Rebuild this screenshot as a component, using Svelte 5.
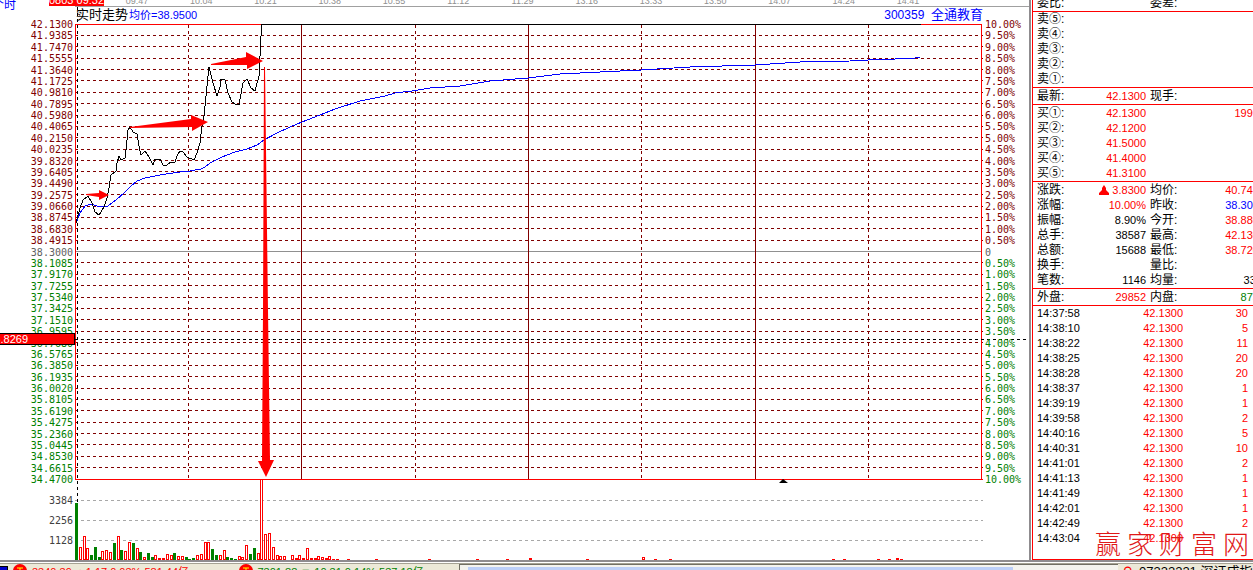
<script>
    const times = ['09:47', '10:04', '10:21', '10:38', '10:55', '11:12', '11:29', '13:16', '13:33', '13:50', '14:07', '14:24', '14:41']

    // 41 rows, from +10% down to -10% of the previous close
    const levels = Array.from({ length: 41 }, (_, i) => ({
        y: Math.floor(24 + i * 11.375) + 0.5,
        price: (42.13 - i * 0.1915).toFixed(4),
        percent: i === 20 ? '0' : Math.abs(10 - i * 0.5).toFixed(2) + '%',
        tone: i < 20 ? 'up' : i > 20 ? 'down' : 'flat',
    }))
    const volumeLevels = [
        { y: 500.5, label: '3384' },
        { y: 520.5, label: '2256' },
        { y: 540.5, label: '1128' },
    ]

    const priceLine = '76,223 80,208 83,200 88,196 92,203 95,212 99,215 104,207 107,198 109,188 111,175 116,171 117,163 119,156 121,160 125,158 126,150 128,130 130,127 133,132 137,134 139,146 141,155 145,151 149,157 153,165 155,159 160,159 163,165 167,165 171,162 175,162 177,156 180,151 183,152 187,157 194,160 197,153 200,143 202,126 204,116 207,86 209,67 213,83 217,96 220,87 221,79 225,80 228,93 232,102 235,104 239,105 243,83 247,79 251,88 255,91 259,76 261,36 262,24.5 921,24.5'
    const averageLine = '76,223 80,213 85,206 91,204 97,206 103,207 108,206 116,200 124,193 131,186 137,181 145,178 155,176 166,174 180,172 190,171 201,169 205,167 210,163 222,157 235,152 247,149 257,145 264,140 277,133 290,127 302,122 320,115 335,109 360,101 385,96 395,93 412,91 430,88 460,86 490,81 528,78 560,74 600,72 641,70 690,67 755,65 800,62 850,61 868,60 895,59 915,58 920,57'

    // [x, top]
    const redBars = [
        [79, 547], [83, 536], [86, 548], [101, 551], [105, 550], [109, 552], [117, 536], [124, 551], [128, 542],
        [136, 548], [143, 557], [154, 555], [158, 558], [162, 558], [166, 554], [170, 555], [177, 556], [181, 556],
        [196, 555], [200, 554], [204, 542], [207, 542], [219, 555], [223, 550], [238, 556], [241, 557], [245, 545],
        [257, 553], [260, 479], [264, 534], [268, 533], [272, 547], [276, 555], [279, 556], [283, 556], [291, 555],
        [295, 558], [298, 555], [302, 558], [306, 548], [310, 558], [314, 558], [317, 556], [321, 557], [325, 558],
        [328, 556], [332, 559], [336, 559], [347, 559], [375, 559], [428, 559], [476, 559], [506, 559], [529, 558],
        [586, 559], [642, 557], [654, 559], [669, 559], [832, 559], [843, 559], [877, 559], [888, 559], [896, 558],
        [900, 559],
    ]
    const greenBars = [
        [75, 503], [90, 555], [94, 547], [98, 557], [113, 543], [120, 550], [132, 543], [139, 552], [147, 553],
        [151, 557], [173, 553], [185, 557], [188, 559], [192, 558], [211, 549], [215, 555], [226, 557], [230, 558],
        [234, 559], [249, 554], [253, 548],
    ]

    const asks = ['卖⑤:', '卖④:', '卖③:', '卖②:', '卖①:']
    const bids = [
        ['买①:', '42.1300', '19910'],
        ['买②:', '42.1200', ''],
        ['买③:', '41.5000', ''],
        ['买④:', '41.4000', ''],
        ['买⑤:', '41.3100', ''],
    ]
    const stats = [
        ['涨跌:', '3.8300', 'red', '均价:', '40.7410', 'red'],
        ['涨幅:', '10.00%', 'red', '昨收:', '38.3000', 'blue'],
        ['振幅:', '8.90%', '', '今开:', '38.8800', 'red'],
        ['总手:', '38587', '', '最高:', '42.1300', 'red'],
        ['总额:', '15688', '', '最低:', '38.7200', 'red'],
        ['换手:', '', '', '量比:', '', ''],
        ['笔数:', '1146', '', '均量:', '33.7', ''],
    ]
    const ticks = [
        ['14:37:58', 30], ['14:38:10', 5], ['14:38:22', 11], ['14:38:25', 20],
        ['14:38:28', 20], ['14:38:37', 1], ['14:39:19', 1], ['14:39:58', 2],
        ['14:40:16', 5], ['14:40:31', 10], ['14:41:01', 2], ['14:41:13', 1],
        ['14:41:49', 1], ['14:42:01', 1], ['14:42:49', 2], ['14:43:04', ''],
    ]
</script>

<div class="app">
    <div class="main">
        <section class="chart">
            <div class="ruler">
                <span class="period">个时</span>
                <span class="stamp">0803 09:32</span>
                <div class="times">
                    {#each times as time}
                        <span>{time}</span>
                    {/each}
                </div>
            </div>
            <header class="title">
                <span class="name">实时走势</span>
                <span class="average">均价=38.9500</span>
                <span class="stock">300359&nbsp; <b>全通教育</b></span>
            </header>
            <div class="body">
                <div class="axis left">
                    <div class="scale">
                        {#each levels as level}
                            <span class={level.tone}>{level.price}</span>
                        {/each}
                    </div>
                    <div class="volumes">
                        {#each volumeLevels as level}
                            <span>{level.label}</span>
                        {/each}
                    </div>
                    <div class="cursor"><span>36.8269</span></div>
                </div>

                <svg class="plot" viewBox="75 23 908 537" preserveAspectRatio="none">
                    <g class="crisp">
                        {#each levels.slice(1, 40) as level}
                            {#if level.tone === 'flat'}
                                <line class="zero" x1="76" x2="982" y1={level.y} y2={level.y} />
                            {:else}
                                <line class="grid dash" x1="75" x2="983" y1={level.y} y2={level.y} />
                            {/if}
                        {/each}
                        {#each [188.5, 415.5, 641.5, 868.5] as x}
                            <line class="grid dash" x1={x} x2={x} y1="25" y2="479" />
                        {/each}
                        {#each [301.5, 528.5, 755.5] as x}
                            <line class="grid" x1={x} x2={x} y1="25" y2="479" />
                        {/each}
                        {#each volumeLevels as level}
                            <line class="volume dash" x1="75" x2="983" y1={level.y} y2={level.y} />
                        {/each}
                        <path class="frame" d="M75.5 480V24.5H981.5V479M75 479.5H983" />

                        {#each greenBars as [x, top]}
                            <rect class="bar-down" {x} y={top} width="3" height={560 - top} />
                        {/each}
                        {#each redBars as [x, top]}
                            <rect class="bar-edge" {x} y={top} width="3" height={560 - top} />
                            {#if top < 558}
                                <rect class="bar-hole" x={x + 1} y={top + 1} width="1" height={558 - top} />
                            {/if}
                        {/each}

                        <line class="cross dash" x1="77.5" x2="77.5" y1="7" y2="502" />
                        <line class="cross dash" x1="75" x2="1027" y1="339.5" y2="339.5" />
                        <polyline class="average-line" points={averageLine} />
                        <polyline class="price-line" points={priceLine} />
                    </g>
                    <g class="arrows">
                        <path d="M86 194L99 193V190L109 195L99 200V197L86 195Z" />
                        <path d="M130 127L191 119V115L208 122L192 131V127L130 128Z" />
                        <path d="M211 64L246 57V52L263 61L247 69V65L211 65Z" />
                        <path d="M264 67H265L268 310L270 460H274L266 477L258 461H262L263 310Z" />
                    </g>
                    <path class="marker" d="M783 479L788 483H779Z" />
                </svg>

                <div class="axis right">
                    <div class="scale">
                        {#each levels as level}
                            <span class={level.tone}>{level.percent}</span>
                        {/each}
                    </div>
                </div>
            </div>
        </section>

        <aside class="quotes">
            <table class="block head">
                <tbody>
                    <tr><th>委比:</th><td></td><th class="second">委差:</th><td></td></tr>
                </tbody>
            </table>
            <table class="block">
                <tbody>
                    {#each asks as ask}
                        <tr><th>{ask}</th><td></td><th class="second"></th><td></td></tr>
                    {/each}
                </tbody>
            </table>
            <table class="block padded">
                <tbody>
                    <tr><th>最新:</th><td class="red">42.1300</td><th class="second">现手:</th><td></td></tr>
                </tbody>
            </table>
            <table class="block padded">
                <tbody>
                    {#each bids as [label, price, amount]}
                        <tr><th>{label}</th><td class="red">{price}</td><th class="second"></th><td class="red">{amount}</td></tr>
                    {/each}
                </tbody>
            </table>
            <table class="block padded">
                <tbody>
                    {#each stats as [label, value, tone, label2, value2, tone2], i}
                        <tr>
                            <th>{label}</th>
                            <td class={tone}>
                                {#if i === 0}
                                    <svg class="rise" viewBox="0 0 10 10"><path d="M5 0L7 3V5L10 8V10H0V8L3 5V3Z" /></svg>
                                {/if}
                                {value}
                            </td>
                            <th class="second">{label2}</th>
                            <td class={tone2}>{value2}</td>
                        </tr>
                    {/each}
                </tbody>
            </table>
            <table class="block padded">
                <tbody>
                    <tr><th>外盘:</th><td class="red">29852</td><th class="second">内盘:</th><td class="green">8735</td></tr>
                </tbody>
            </table>
            <table class="ticks">
                <tbody>
                    {#each ticks as [time, amount]}
                        <tr><td class="time">{time}</td><td class="price">42.1300</td><td>{amount}</td></tr>
                    {/each}
                </tbody>
            </table>
            <div class="brand">
                {#each '赢家财富网' as char}<span>{char}</span>{/each}
            </div>
        </aside>
    </div>

    <footer class="status">
        <div class="indexes">
            <i class="window"></i>
            <svg class="coin" viewBox="0 0 14 14"><circle cx="7" cy="7" r="7" /><path d="M4 4H10M3 7H11M7 4V11" /></svg>
            <span class="red">3340.39 ▲1.17 0.03% 581.44亿</span>
            <svg class="coin" viewBox="0 0 14 14"><circle cx="7" cy="7" r="7" /><path d="M4 4H10M3 7H11M7 4V11" /></svg>
            <span class="green">7301.88 ▼ 10.31 0.14% 537.18亿</span>
        </div>
        <div class="scroll"><i></i></div>
        <div class="feed"><span class="red">⚲</span><span>07332221 深证成指</span></div>
    </footer>
</div>

<style>
    :global(body) {
        margin: 0;
        background: #fff;
    }

    .app {
        display: flex;
        flex-direction: column;
        height: 100vh;
        overflow: hidden;
        color: #000;
        font: 11px/15px "Liberation Sans", "Noto Sans CJK SC", sans-serif;
    }

    .main {
        flex: 1;
        min-height: 0;
        display: flex;
        overflow: hidden;
        border-bottom: 2px solid #8f8c8f;
    }

    .red { color: #f00; }
    .green { color: #008000; }
    .blue { color: #00f; }

    .chart {
        flex: 1;
        min-width: 0;
        display: flex;
        flex-direction: column;
    }

    .ruler {
        position: relative;
        height: 7px;
        padding-left: 75px;
    }
    .times {
        display: flex;
        align-items: flex-end;
        box-sizing: border-box;
        height: 7px;
        padding: 0 89px 0 30px;
        overflow: hidden;
        border-bottom: 1px solid #a0a0a0;
        color: #909090;
        font-size: 9px;
        line-height: 9px;
    }
    .times span {
        flex: 1;
        text-align: center;
    }
    .period {
        position: absolute;
        left: -8px;
        top: -2px;
        color: #00f;
        font-size: 12px;
    }
    .stamp {
        position: absolute;
        left: 49px;
        bottom: 1px;
        background: #f00;
        color: #fff;
        line-height: 11px;
        white-space: nowrap;
    }

    .title {
        display: flex;
        height: 16px;
        padding: 0 46px 0 76px;
        font-size: 12px;
        line-height: 16px;
        white-space: nowrap;
    }
    .title .name {
        font-size: 13px;
        margin-right: 1px;
    }
    .title .average {
        color: #00f;
        font-size: 11px;
    }
    .title .stock {
        margin-left: auto;
        color: #00f;
    }
    .title b {
        font-weight: normal;
        font-size: 13px;
    }

    .body {
        flex: 1;
        display: flex;
        min-height: 0;
    }

    .plot {
        flex: 1;
        min-width: 0;
        height: 537px;
        overflow: visible;
        fill: none;
    }
    .crisp { shape-rendering: crispEdges; }
    .dash { stroke-dasharray: 3 3; }
    .grid { stroke: #800000; }
    .zero { stroke: #909090; }
    .volume { stroke: #a8a8a8; }
    .frame { stroke: #f00; }
    .cross { stroke: #000; }
    .price-line { stroke: #000; }
    .average-line { stroke: #00f; }
    .bar-down { fill: #008000; }
    .bar-edge { fill: #f00; }
    .bar-hole { fill: #fff; }
    .arrows { fill: #f00; }
    .marker { fill: #000; }

    .axis {
        position: relative;
        font: 10px/11px "DejaVu Sans Mono", monospace;
    }
    .axis.left {
        width: 75px;
        text-align: right;
    }
    .axis.right {
        width: 46px;
    }
    .axis.left .scale,
    .volumes {
        padding-right: 2px;
    }
    .axis.right .scale {
        padding-left: 2px;
    }
    .scale {
        display: flex;
        flex-direction: column;
        justify-content: space-between;
        height: 466px;
        margin-top: -4px;
    }
    .volumes {
        display: flex;
        flex-direction: column;
        gap: 9px;
        padding-top: 10px;
        color: #404040;
    }
    .up { color: #800000; }
    .down { color: #008000; }
    .flat { color: #606060; }

    .cursor {
        position: absolute;
        left: 0;
        top: 310px;
        width: 100%;
        height: 12px;
        box-sizing: border-box;
        display: flex;
        justify-content: flex-end;
        padding-right: 46px;
        overflow: hidden;
        border: solid #000;
        border-width: 1px 1px 1px 0;
        background: #f00;
        color: #fff;
        font: 11px/11px "Liberation Sans", sans-serif;
    }

    .quotes {
        position: relative;
        flex: 0 0 220px;
        overflow: hidden;
        margin-left: 3px;
        border-left: 1px solid #f00;
        border-bottom: 1px solid #f00;
        box-shadow: -1px 0 #fff, -3px 0 #8f8c8f;
    }

    /* the fixed columns run past the right edge and are cut off there */
    table {
        table-layout: fixed;
        border-spacing: 0;
    }
    .block {
        width: 232px;
        padding-left: 4px;
        border-bottom: 1px solid #f00;
    }
    .padded {
        padding-top: 1px;
    }
    tr {
        height: 15px;
    }
    th,
    td {
        padding: 0;
        height: 15px;
        line-height: 15px;
        vertical-align: middle;
        white-space: nowrap;
    }
    th {
        width: 28px;
        font-size: 12px;
        font-weight: normal;
        text-align: left;
    }
    th.second {
        width: 32px;
        padding-left: 4px;
        box-sizing: border-box;
    }
    td {
        text-align: right;
    }
    .block td:nth-child(2) {
        width: 81px;
    }
    .head {
        margin-top: -4px;
    }
    .rise {
        width: 10px;
        height: 10px;
        fill: #f00;
        vertical-align: -1px;
    }

    .ticks {
        width: 215px;
        padding-left: 4px;
    }
    .ticks td {
        color: #f00;
    }
    .ticks .time {
        width: 44px;
        color: #000;
        text-align: left;
    }
    .ticks .price {
        width: 102px;
    }

    .brand {
        position: absolute;
        right: 4px;
        bottom: 1px;
        display: flex;
        gap: 6px;
        color: #e01818;
        font: 300 26px/30px "Noto Sans CJK SC", sans-serif;
    }

    .status {
        display: flex;
        height: 6px;
        margin-top: 1px;
        overflow: hidden;
        border-top: 1px solid #a5a294;
        background: #ece9d8;
        line-height: 15px;
        white-space: nowrap;
    }
    .indexes {
        display: flex;
        gap: 5px;
        flex: 0 0 459px;
        overflow: hidden;
    }
    .indexes span {
        flex: 1;
        padding-top: 1px;
    }
    .window {
        width: 7px;
        height: 6px;
        margin-top: 2px;
        border: 1px solid #000;
        border-left: 0;
        background: #00c;
    }
    .coin {
        width: 14px;
        height: 14px;
        fill: #f00;
    }
    .coin path {
        stroke: #ff0;
    }
    .scroll {
        flex: 1;
        display: flex;
        padding: 2px 105px 0 8px;
        border-left: 1px solid #716f64;
        border-top: 1px solid #716f64;
        background: #f4f3ee;
    }
    .scroll i {
        flex: 1;
        background: #bccff8;
    }
    .feed {
        display: flex;
        gap: 6px;
        flex: 0 0 135px;
        padding-left: 5px;
        box-sizing: border-box;
        overflow: hidden;
        font-size: 13px;
    }
</style>
